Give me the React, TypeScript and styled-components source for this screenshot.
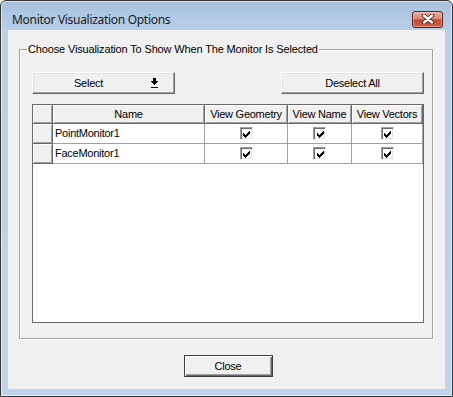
import React from 'react';
import styled, { createGlobalStyle } from 'styled-components';

const GlobalStyle = createGlobalStyle`
  * {
    box-sizing: border-box;
  }
  body {
    margin: 0;
    background: #ffffff;
  }
`;

const Window = styled.div`
  width: 453px;
  height: 397px;
  display: flex;
  flex-direction: column;
  padding: 0 7px 7px;
  border: 1px solid #383838;
  border-radius: 6px 6px 0 0;
  background: linear-gradient(#a7c0dd 0, #b9d0e9 30px, #bdd4ec 100%);
  box-shadow: inset 1px 1px 0 rgba(255, 255, 255, 0.55),
    inset -1px -1px 0 rgba(255, 255, 255, 0.55);
  font-family: 'Liberation Sans', Arial, sans-serif;
  font-size: 11px;
  color: #000;
`;

const TitleBar = styled.div`
  height: 29px;
  display: flex;
  align-items: center;
  padding: 7px 2px 0 4px;
`;

const Title = styled.div`
  font-family: 'Noto Sans', 'Open Sans', sans-serif;
  font-size: 12px;
  letter-spacing: -0.3px;
  color: #1b1b1b;
`;

const CaptionClose = styled.div`
  margin-left: auto;
  width: 31px;
  height: 17px;
  display: flex;
  align-items: center;
  justify-content: center;
  border: 1px solid #5c1f18;
  border-radius: 3px;
  background: linear-gradient(#e6aa9e 0%, #d88a7b 45%, #c24a36 52%, #cc5f4a 100%);
  box-shadow: inset 0 0 0 1px rgba(255, 220, 210, 0.45);
`;

const Client = styled.div`
  flex: 1;
  display: flex;
  flex-direction: column;
  background: #f0f0f0;
  padding: 19px 12px 0 11px;
`;

const GroupBox = styled.div`
  position: relative;
  border: 1px solid #a0a0a0;
  box-shadow: 1px 1px 0 #ffffff, inset 1px 1px 0 #ffffff;
  padding: 22px 8px 15px 12px;
`;

const GroupLabel = styled.span`
  position: absolute;
  top: -7px;
  left: 7px;
  padding: 0 1px;
  line-height: 13px;
  background: #f0f0f0;
  letter-spacing: -0.15px;
`;

const ButtonRow = styled.div`
  display: flex;
  justify-content: space-between;
`;

const PushButton = styled.div<{ $width: number; $split?: boolean }>`
  width: ${(p) => p.$width}px;
  height: 22px;
  display: flex;
  align-items: center;
  justify-content: ${(p) => (p.$split ? 'space-between' : 'center')};
  padding: ${(p) => (p.$split ? '0 16px 0 41px' : '0 0 1px')};
  background: #f0f0f0;
  border: 1px solid;
  border-color: #ffffff #696969 #696969 #ffffff;
  box-shadow: inset -1px -1px 0 #a0a0a0, inset 1px 1px 0 #e3e3e3;
  letter-spacing: -0.25px;
`;

const DefaultButton = styled(PushButton)`
  border-color: #404040;
  box-shadow: inset 1px 1px 0 #ffffff, inset -1px -1px 0 #696969,
    inset -2px -2px 0 #a0a0a0;
`;

const GridBox = styled.div`
  margin-top: 10px;
  height: 219px;
  border: 1px solid #696969;
  background: #ffffff;
`;

const Table = styled.table`
  width: 390px;
  table-layout: fixed;
  border-collapse: separate;
  border-spacing: 0;
  font-size: 11px;
  letter-spacing: -0.25px;
`;

const HeadRow = styled.tr`
  height: 19px;
`;

const BodyRow = styled.tr`
  height: 20px;
`;

const HeadCell = styled.th<{ $width: number }>`
  width: ${(p) => p.$width}px;
  padding: 0 0 1px;
  font-weight: normal;
  text-align: center;
  white-space: nowrap;
  background: #f0f0f0;
  border-right: 1px solid #696969;
  border-bottom: 1px solid #696969;
  box-shadow: inset 1px 1px 0 #ffffff, inset -1px -1px 0 #a0a0a0;
`;

const RowHead = styled.td`
  padding: 0;
  background: #f0f0f0;
  border-right: 1px solid #696969;
  border-bottom: 1px solid #696969;
  box-shadow: inset 1px 1px 0 #ffffff, inset -1px -1px 0 #a0a0a0;
`;

const Cell = styled.td<{ $center?: boolean }>`
  padding: ${(p) => (p.$center ? '0' : '0 0 1px 2px')};
  text-align: ${(p) => (p.$center ? 'center' : 'left')};
  white-space: nowrap;
  border-right: 1px solid #a0a0a0;
  border-bottom: 1px solid #a0a0a0;
`;

const CheckBox = styled.span`
  width: 13px;
  height: 13px;
  display: inline-flex;
  align-items: center;
  justify-content: center;
  vertical-align: middle;
  background: #ffffff;
  border: 1px solid;
  border-color: #a0a0a0 #ffffff #ffffff #a0a0a0;
  box-shadow: inset 1px 1px 0 #696969, inset -1px -1px 0 #e3e3e3;
  padding: 1px 0 0 1px;
`;

const Footer = styled.div`
  display: flex;
  justify-content: center;
  padding: 16px 0 0 4px;
`;

const CloseGlyph = () => (
  <svg width="14" height="10" viewBox="0 0 14 10">
    <path d="M3 1.5 L11 8.5 M11 1.5 L3 8.5" stroke="#5a2018" strokeWidth="4.2" strokeLinecap="round" />
    <path d="M3 1.5 L11 8.5 M11 1.5 L3 8.5" stroke="#ffffff" strokeWidth="2.4" strokeLinecap="round" />
  </svg>
);

const DropArrow = () => (
  <svg width="7" height="10" viewBox="0 0 7 10" shapeRendering="crispEdges">
    <polygon
      points="2,0 5,0 5,3 7,3 7,4 6,4 6,5 5,5 5,6 4,6 4,7 3,7 3,6 2,6 2,5 1,5 1,4 0,4 0,3 2,3"
      fill="#000"
    />
    <rect x="0" y="9" width="7" height="1" fill="#000" />
  </svg>
);

const Check = () => (
  <svg width="7" height="7" viewBox="0 0 7 7" shapeRendering="crispEdges">
    <polygon
      points="6,0 7,0 7,3 6,3 6,4 5,4 5,5 4,5 4,6 3,6 3,7 2,7 2,6 1,6 1,5 0,5 0,2 1,2 1,3 2,3 2,4 3,4 3,3 4,3 4,2 5,2 5,1 6,1"
      fill="#000"
    />
  </svg>
);

const columns = [
  { key: 'row', label: '', width: 20 },
  { key: 'name', label: 'Name', width: 152 },
  { key: 'geometry', label: 'View Geometry', width: 83 },
  { key: 'viewName', label: 'View Name', width: 64 },
  { key: 'vectors', label: 'View Vectors', width: 71 },
];

const monitors = [
  { id: 'm1', name: 'PointMonitor1', geometry: true, viewName: true, vectors: true },
  { id: 'm2', name: 'FaceMonitor1', geometry: true, viewName: true, vectors: true },
];

export default function App() {
  return (
    <>
      <GlobalStyle />
      <Window>
        <TitleBar>
          <Title>Monitor Visualization Options</Title>
          <CaptionClose>
            <CloseGlyph />
          </CaptionClose>
        </TitleBar>
        <Client>
          <GroupBox>
            <GroupLabel>Choose Visualization To Show When The Monitor Is Selected</GroupLabel>
            <ButtonRow>
              <PushButton $width={143} $split>
                <span>Select</span>
                <DropArrow />
              </PushButton>
              <PushButton $width={143}>Deselect All</PushButton>
            </ButtonRow>
            <GridBox>
              <Table>
                <thead>
                  <HeadRow>
                    {columns.map((c) => (
                      <HeadCell key={c.key} $width={c.width}>
                        {c.label}
                      </HeadCell>
                    ))}
                  </HeadRow>
                </thead>
                <tbody>
                  {monitors.map((m) => (
                    <BodyRow key={m.id}>
                      <RowHead />
                      <Cell>{m.name}</Cell>
                      <Cell $center>{m.geometry && <CheckBox><Check /></CheckBox>}</Cell>
                      <Cell $center>{m.viewName && <CheckBox><Check /></CheckBox>}</Cell>
                      <Cell $center>{m.vectors && <CheckBox><Check /></CheckBox>}</Cell>
                    </BodyRow>
                  ))}
                </tbody>
              </Table>
            </GridBox>
          </GroupBox>
          <Footer>
            <DefaultButton $width={89}>Close</DefaultButton>
          </Footer>
        </Client>
      </Window>
    </>
  );
}
